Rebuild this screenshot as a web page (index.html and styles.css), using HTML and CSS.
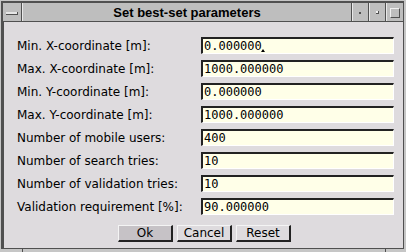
FILE: index.html
```html
<!DOCTYPE html>
<html>
<head>
<meta charset="utf-8">
<link rel="stylesheet" href="styles.css">
</head>
<body>
<div class="window">
  <div class="titlebar">
    <div class="tb-btn menu"><span class="menu-bar"></span></div>
    <div class="title">Set best-set parameters</div>
    <div class="tb-btn small"><span class="dot"></span></div>
    <div class="tb-btn small"><span class="sq"></span></div>
    <div class="tb-btn close"><span class="bigsq"></span></div>
  </div>
  <div class="content">
    <div class="form">
      <div class="row"><span class="label">Min. X-coordinate [m]:</span><div class="field">0.000000<span class="caret"></span></div></div>
      <div class="row"><span class="label">Max. X-coordinate [m]:</span><div class="field">1000.000000</div></div>
      <div class="row"><span class="label">Min. Y-coordinate [m]:</span><div class="field">0.000000</div></div>
      <div class="row"><span class="label">Max. Y-coordinate [m]:</span><div class="field">1000.000000</div></div>
      <div class="row"><span class="label">Number of mobile users:</span><div class="field">400</div></div>
      <div class="row"><span class="label">Number of search tries:</span><div class="field">10</div></div>
      <div class="row"><span class="label">Number of validation tries:</span><div class="field">10</div></div>
      <div class="row"><span class="label">Validation requirement [%]:</span><div class="field">90.000000</div></div>
    </div>
    <div class="buttons">
      <button class="btn default">Ok</button>
      <button class="btn">Cancel</button>
      <button class="btn">Reset</button>
    </div>
  </div>
</div>
<div class="frame-bottom"><div class="ticks"></div></div>
</body>
</html>
```
FILE: styles.css
```css
html, body {
  margin: 0;
  padding: 0;
}
body {
  width: 406px;
  height: 252px;
  background: #c6c6c6;
  display: flex;
  flex-direction: column;
  overflow: hidden;
  font-family: "DejaVu Sans", sans-serif;
  font-size: 12px;
  color: #000;
}
.window {
  margin: 1px 2px 0 1px;
  height: 246px;
  border-left: 2px solid #505050;
  border-top: 2px solid #505050;
  border-right: 1px solid #505050;
  border-bottom: 1px solid #505050;
  display: flex;
  flex-direction: column;
}
.titlebar {
  height: 18px;
  border-bottom: 1px solid #505050;
  background: #bebebe;
  display: flex;
}
.tb-btn {
  display: flex;
  align-items: center;
  justify-content: center;
  box-sizing: border-box;
}
.menu {
  width: 19px;
  border-right: 1px solid #505050;
}
.menu-bar {
  width: 11px;
  height: 2px;
  background: #e6e6e6;
  border-right: 1px solid #505050;
  border-bottom: 1px solid #505050;
  margin-top: 2px;
}
.title {
  flex: 1;
  text-align: center;
  font-family: "Liberation Sans", Arial, sans-serif;
  font-weight: bold;
  font-size: 13px;
  line-height: 18px;
  padding-top: 1px;
  border-left: 1px solid #e8e8e8;
}
.small {
  width: 17px;
  border-left: 1px solid #505050;
  box-shadow: inset 1px 0 0 #e8e8e8;
}
.close {
  width: 18px;
  border-left: 1px solid #505050;
  box-shadow: inset 1px 0 0 #e8e8e8;
}
.dot {
  width: 2px;
  height: 2px;
  background: #505050;
  margin-top: 2px;
}
.sq {
  width: 2px;
  height: 2px;
  background: #f0f0f0;
  border-right: 1px solid #505050;
  border-bottom: 1px solid #505050;
  margin-top: 1px;
}
.bigsq {
  width: 8px;
  height: 8px;
  border-top: 1px solid #f0f0f0;
  border-left: 1px solid #f0f0f0;
  border-right: 1px solid #505050;
  border-bottom: 1px solid #505050;
  margin-top: 2px;
}
.content {
  flex: 1;
  background: #dedbde;
  border-left: 1px solid #505050;
  display: flex;
  flex-direction: column;
}
.form {
  padding: 15px 9px 0 13px;
  display: flex;
  flex-direction: column;
  gap: 6px;
}
.row {
  display: flex;
  align-items: center;
  height: 17px;
}
.label {
  flex: 1;
  white-space: nowrap;
}
.field {
  box-sizing: border-box;
  width: 193px;
  height: 17px;
  background: #ffffe8;
  border-top: 2px solid #222;
  border-left: 2px solid #222;
  border-right: 1px solid #ffffff;
  border-bottom: 1px solid #ffffff;
  font-family: "DejaVu Sans Mono", monospace;
  font-size: 12px;
  line-height: 14px;
  padding-left: 1px;
  white-space: nowrap;
}
.caret {
  display: inline-block;
  width: 0;
  height: 0;
  border-left: 2px solid transparent;
  border-right: 2px solid transparent;
  border-bottom: 3px solid #000;
  margin-left: -1px;
  vertical-align: -2px;
}
.buttons {
  margin-top: 10px;
  display: flex;
  justify-content: center;
  gap: 4px;
  padding-left: 2px;
}
.btn {
  box-sizing: border-box;
  width: 55px;
  height: 17px;
  margin: 0;
  padding: 0;
  background: #dedbde;
  border-top: 1px solid #f4f4f4;
  border-left: 1px solid #f4f4f4;
  border-right: 2px solid #222;
  border-bottom: 2px solid #222;
  border-radius: 0;
  font-family: "DejaVu Sans", sans-serif;
  font-size: 12px;
  line-height: 13px;
  color: #000;
}
.btn.default {
  background: #c6c2c6;
}
.frame-bottom {
  height: 3px;
}
.ticks {
  margin-left: 22px;
  width: 362px;
  height: 3px;
  border-left: 1px solid #505050;
  border-right: 1px solid #505050;
}
```
